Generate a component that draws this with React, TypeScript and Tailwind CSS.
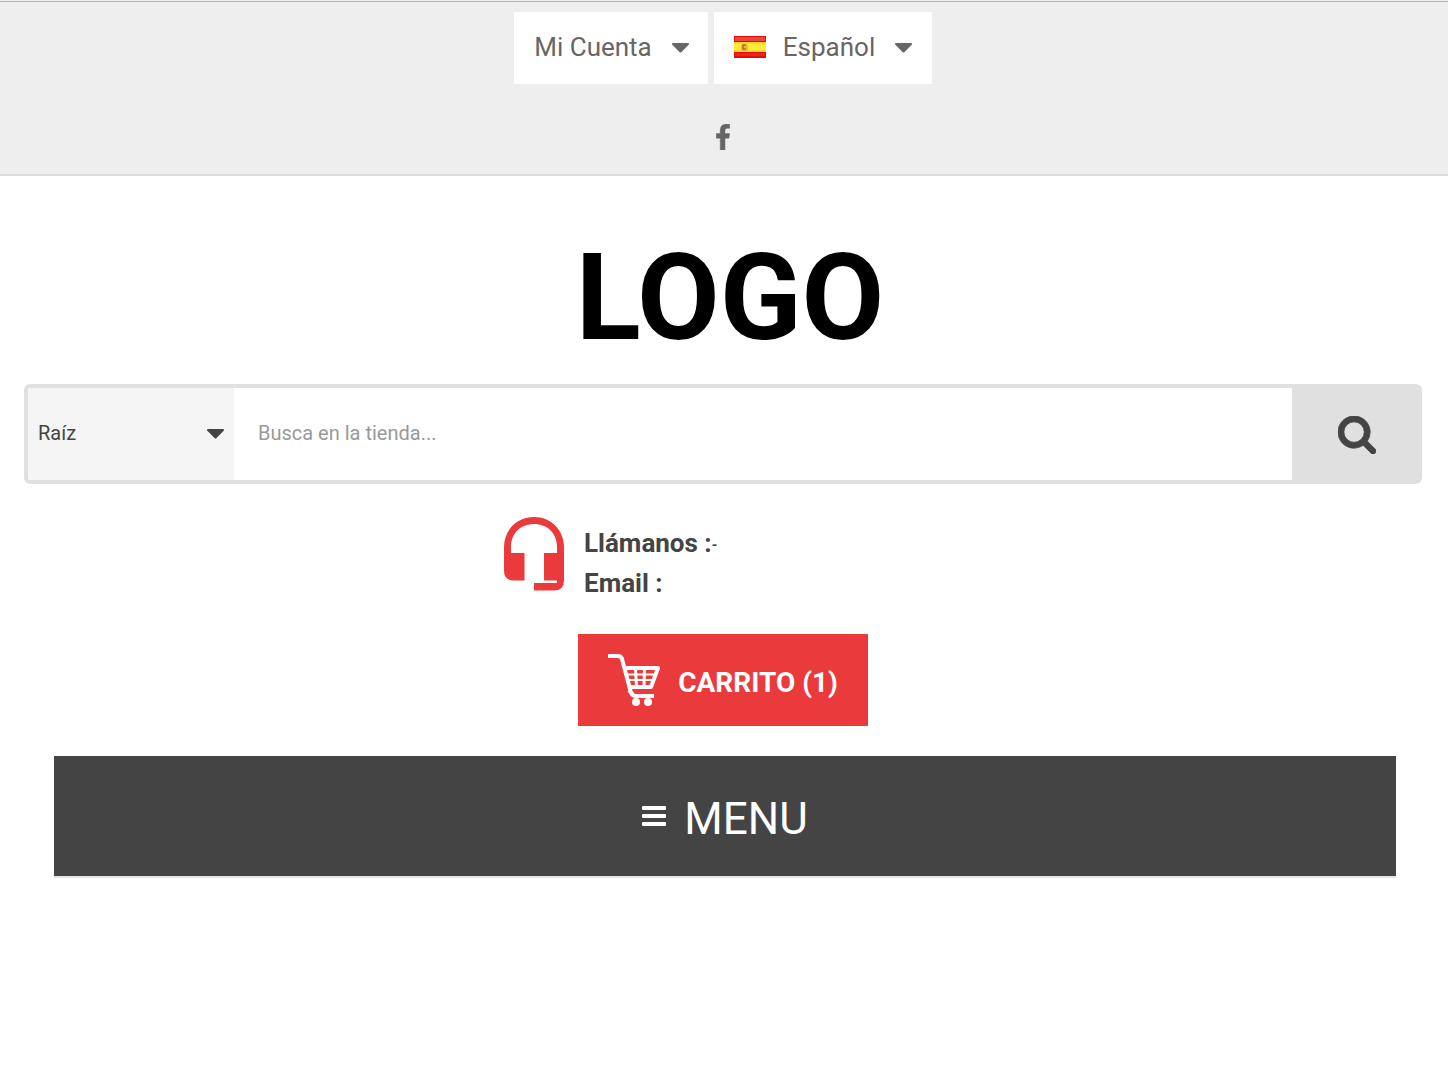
import { useState } from 'react';

interface IconProps {
  className?: string;
}

function CaretIcon({ className }: IconProps) {
  return (
    <svg viewBox="0 640 1024 576" fill="currentColor" className={className} aria-hidden="true">
      <path d="M1024 704q0 26-19 45l-448 448q-19 19-45 19t-45-19l-448-448q-19-19-19-45t19-45 45-19h896q26 0 45 19t19 45z" />
    </svg>
  );
}

function FacebookIcon({ className }: IconProps) {
  return (
    <svg viewBox="479 0 864 1664" fill="currentColor" stroke="currentColor" strokeWidth="30" className={className} aria-hidden="true">
      <path d="M1343 12v264h-157q-86 0-116 36t-30 108v189h293l-39 296h-254v759h-306v-759h-255v-296h255v-218q0-186 104-288.5t277-102.5q147 0 228 12z" />
    </svg>
  );
}

function SearchIcon({ className }: IconProps) {
  return (
    <svg viewBox="0 128 1664 1664" fill="currentColor" stroke="currentColor" strokeWidth="36" className={className} aria-hidden="true">
      <path d="M1152 832q0-185-131.5-316.5t-316.5-131.5-316.5 131.5-131.5 316.5 131.5 316.5 316.5 131.5 316.5-131.5 131.5-316.5zm512 832q0 52-38 90t-90 38q-54 0-90-38l-343-342q-179 124-399 124-143 0-273.5-55.5t-225-150-150-225-55.5-273.5 55.5-273.5 150-225 225-150 273.5-55.5 273.5 55.5 225 150 150 225 55.5 273.5q0 220-124 399l343 343q37 37 37 90z" />
    </svg>
  );
}

function BarsIcon({ className }: IconProps) {
  return (
    <svg viewBox="0 0 24 20" fill="currentColor" className={className} aria-hidden="true">
      <rect y="0" width="24" height="4" rx="1" />
      <rect y="8" width="24" height="4" rx="1" />
      <rect y="16" width="24" height="4" rx="1" />
    </svg>
  );
}

function HeadsetIcon({ className }: IconProps) {
  return (
    <svg viewBox="0 0 60 75" fill="currentColor" className={className} aria-hidden="true">
      <path d="M30 1C13 1 0 14 0 31V54.500Q0 64.500 10 64.500H20.500V37H7V31C7 17 17 8 30 8S53 17 53 31V37H40V64.500H53V67H30V74.500H50Q60 74.500 60 64.500V31C60 14 47 1 30 1Z" />
    </svg>
  );
}

function CartIcon({ className }: IconProps) {
  return (
    <svg viewBox="0 0 52 52" fill="none" stroke="currentColor" className={className} aria-hidden="true">
      <path d="M0 2H10Q13 2 14 5L22 35Q23 42 28 42H46" strokeWidth="4" />
      <path d="M16 14H50L43 33H22" strokeWidth="4" strokeLinejoin="round" />
      <path d="M18 20.500H47M20 26H45" strokeWidth="2" />
      <path d="M27.500 14L28.500 33M36.500 14L36 33" strokeWidth="3" />
      <path d="M21 36L25 41" strokeWidth="4" />
      <circle cx="28" cy="48" r="4" fill="currentColor" stroke="none" />
      <circle cx="40" cy="48" r="4" fill="currentColor" stroke="none" />
    </svg>
  );
}

function SpainFlag({ className }: IconProps) {
  return (
    <svg viewBox="0 0 32 22" className={className} aria-hidden="true">
      <rect width="32" height="22" fill="#e00d0a" />
      <rect x="1" y="1" width="30" height="4" fill="#e9473a" />
      <rect x="1" y="17" width="30" height="3" fill="#e5281c" />
      <rect y="6" width="32" height="10" fill="#fcd62a" />
      <rect y="8" width="32" height="6" fill="#fdea3a" />
      <rect x="7" y="8" width="7" height="7" rx="2" fill="#f0b840" />
      <path d="M12 9H9V13H12" fill="none" stroke="#c0682c" strokeWidth="1.500" />
    </svg>
  );
}

export default function App() {
  const [language, setLanguage] = useState('es');
  const [category, setCategory] = useState('root');
  const [query, setQuery] = useState('');

  return (
    <div className="bg-white font-[Roboto,sans-serif] text-[#444]">
      <div className="border-b-2 border-[#dcdcdc] bg-[#eee] text-[#666]">
        <div className="h-[2px] border-b border-[#b2b4b4]" />
        <div className="flex flex-col items-center pt-[10px] pr-[2px] pb-6">
          <div className="flex gap-[6px] text-[26px] leading-[32px]">
            <button
              type="button"
              aria-haspopup="menu"
              className="flex h-[72px] items-center gap-5 bg-white pr-[19px] pl-5"
            >
              <span className="pb-[2px]">Mi Cuenta</span>
              <CaretIcon className="w-[17px]" />
            </button>
            <label className="relative flex h-[72px] items-center bg-white pb-[2px] pl-5">
              <SpainFlag className="h-[22px] w-8" />
              <select
                aria-label="Idioma"
                value={language}
                onChange={(e) => setLanguage(e.target.value)}
                className="h-full appearance-none bg-transparent pr-14 pl-[17px]"
              >
                <option value="es">Español</option>
              </select>
              <CaretIcon className="pointer-events-none absolute top-[31px] right-5 w-[17px]" />
            </label>
          </div>
          <a href="#facebook" aria-label="Facebook" className="mt-10">
            <FacebookIcon className="h-[26px] w-[14px]" />
          </a>
        </div>
      </div>

      <header className="flex flex-col items-center pt-[52px] pr-[26px] pl-6">
        <h1 className="pl-[14px] text-[120px] leading-[140px] font-bold text-black">LOGO</h1>

        <form
          onSubmit={(e) => e.preventDefault()}
          className="mt-4 flex h-[100px] w-full overflow-hidden rounded-md border-4 border-[#e0e0e0] text-[20px]"
        >
          <div className="relative flex w-[206px] shrink-0 items-center bg-[#f5f5f5]">
            <select
              aria-label="Categoría"
              value={category}
              onChange={(e) => setCategory(e.target.value)}
              className="h-full w-full appearance-none px-[10px] pb-[2px]"
            >
              <option value="root">Raíz</option>
            </select>
            <CaretIcon className="pointer-events-none absolute right-[10px] w-[17px]" />
          </div>
          <input
            type="search"
            aria-label="Buscar"
            placeholder="Busca en la tienda..."
            value={query}
            onChange={(e) => setQuery(e.target.value)}
            className="min-w-0 flex-1 px-6 pb-[2px] outline-none placeholder:text-[#999]"
          />
          <button
            type="submit"
            aria-label="Buscar"
            className="flex w-[126px] items-center justify-center bg-[#e0e0e0] pt-[2px] pl-1"
          >
            <SearchIcon className="w-[38px]" />
          </button>
        </form>

        <div className="mt-8 flex w-full max-w-[438px] gap-5">
          <HeadsetIcon className="h-[75px] w-[60px] text-[#eb3a3c]" />
          <div className="pt-[7px] text-[26px] leading-[40px] font-bold">
            <p>
              Llámanos :<span className="align-middle text-[14px] leading-none">-</span>
            </p>
            <p>Email :</p>
          </div>
        </div>

        <a
          href="#carrito"
          className="mt-[31px] flex h-[92px] items-center gap-[18px] bg-[#eb3a3c] px-[30px] text-[28px] font-bold text-white"
        >
          <CartIcon className="w-[52px]" />
          <span className="pt-[6px]">CARRITO (1)</span>
        </a>
      </header>

      <nav className="mt-[30px] pr-[52px] pl-[54px]">
        <button
          type="button"
          className="flex h-[122px] w-full items-center justify-center gap-[18px] border-b-2 border-[#e5e5e5] bg-[#444] text-[44px] text-white"
        >
          <BarsIcon className="w-6" />
          <span className="pt-[6px]">MENU</span>
        </button>
      </nav>
    </div>
  );
}
